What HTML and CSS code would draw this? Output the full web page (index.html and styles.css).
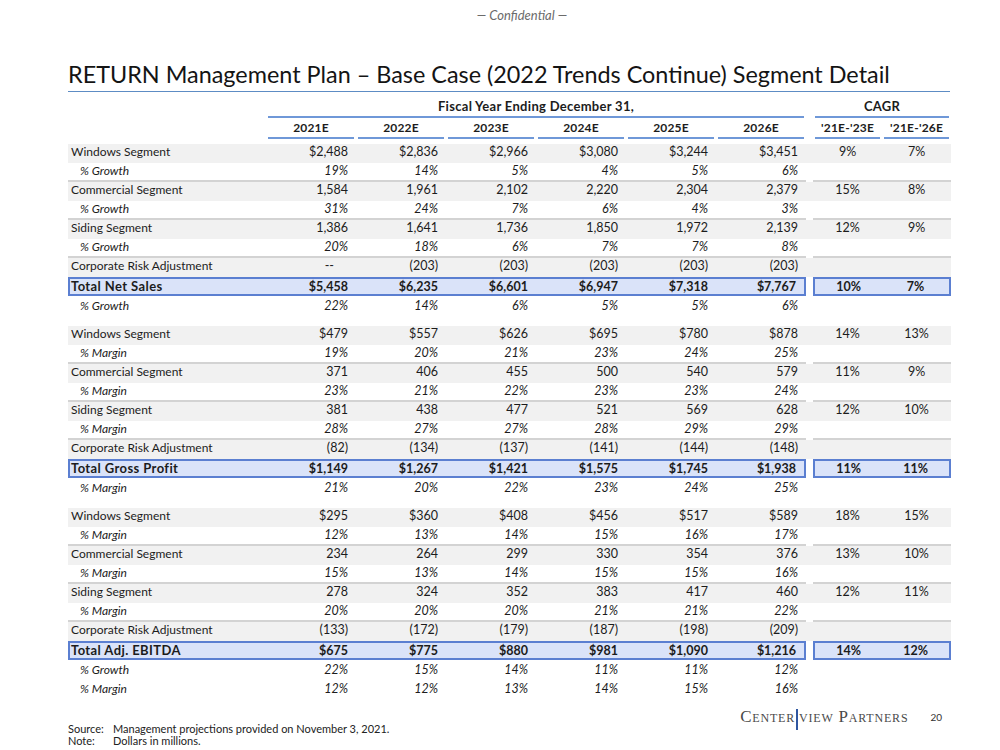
FILE: index.html
```html
<!DOCTYPE html>
<html>
<head>
<meta charset="utf-8">
<link rel="stylesheet" href="styles.css">
</head>
<body>
<div class="conf">— Confidential —</div>
<h1 class="title">RETURN Management Plan – Base Case (2022 Trends Continue) Segment Detail</h1>
<table class="fin">
  <colgroup>
    <col class="c-label"><col class="c-yr"><col class="c-yr"><col class="c-yr"><col class="c-yr"><col class="c-yr"><col class="c-yr"><col class="c-sp"><col class="c-cg"><col class="c-cg">
  </colgroup>
  <thead>
    <tr class="h1">
      <th></th>
      <th colspan="6"><div class="hd">Fiscal Year Ending December 31,</div></th>
      <th></th>
      <th colspan="2"><div class="hd">CAGR</div></th>
    </tr>
    <tr class="h2">
      <th></th>
      <th><div class="hd">2021E</div></th>
      <th><div class="hd">2022E</div></th>
      <th><div class="hd">2023E</div></th>
      <th><div class="hd">2024E</div></th>
      <th><div class="hd">2025E</div></th>
      <th><div class="hd">2026E</div></th>
      <th></th>
      <th><div class="hd">'21E-'23E</div></th>
      <th><div class="hd">'21E-'26E</div></th>
    </tr>
  </thead>
  <tbody>
    <tr class="seg"><td class="lbl">Windows Segment</td><td>$2,488</td><td>$2,836</td><td>$2,966</td><td>$3,080</td><td>$3,244</td><td>$3,451</td><td class="sp"></td><td class="cg">9%</td><td class="cg">7%</td></tr>
    <tr class="pct sep"><td class="lbl">% Growth</td><td>19%</td><td>14%</td><td>5%</td><td>4%</td><td>5%</td><td>6%</td><td class="sp"></td><td class="cg"></td><td class="cg"></td></tr>
    <tr class="seg"><td class="lbl">Commercial Segment</td><td>1,584</td><td>1,961</td><td>2,102</td><td>2,220</td><td>2,304</td><td>2,379</td><td class="sp"></td><td class="cg">15%</td><td class="cg">8%</td></tr>
    <tr class="pct sep"><td class="lbl">% Growth</td><td>31%</td><td>24%</td><td>7%</td><td>6%</td><td>4%</td><td>3%</td><td class="sp"></td><td class="cg"></td><td class="cg"></td></tr>
    <tr class="seg"><td class="lbl">Siding Segment</td><td>1,386</td><td>1,641</td><td>1,736</td><td>1,850</td><td>1,972</td><td>2,139</td><td class="sp"></td><td class="cg">12%</td><td class="cg">9%</td></tr>
    <tr class="pct sep"><td class="lbl">% Growth</td><td>20%</td><td>18%</td><td>6%</td><td>7%</td><td>7%</td><td>8%</td><td class="sp"></td><td class="cg"></td><td class="cg"></td></tr>
    <tr class="seg"><td class="lbl">Corporate Risk Adjustment</td><td class="dash">--</td><td class="neg">(203)</td><td class="neg">(203)</td><td class="neg">(203)</td><td class="neg">(203)</td><td class="neg">(203)</td><td class="sp"></td><td class="cg"></td><td class="cg"></td></tr>
    <tr class="tot"><td class="lbl">Total Net Sales</td><td>$5,458</td><td>$6,235</td><td>$6,601</td><td>$6,947</td><td>$7,318</td><td class="end">$7,767</td><td class="sp"></td><td class="cg first">10%</td><td class="cg end">7%</td></tr>
    <tr class="pct tail"><td class="lbl">% Growth</td><td>22%</td><td>14%</td><td>6%</td><td>5%</td><td>5%</td><td>6%</td><td class="sp"></td><td class="cg"></td><td class="cg"></td></tr>
    <tr class="gap"><td colspan="10"></td></tr>

    <tr class="seg"><td class="lbl">Windows Segment</td><td>$479</td><td>$557</td><td>$626</td><td>$695</td><td>$780</td><td>$878</td><td class="sp"></td><td class="cg">14%</td><td class="cg">13%</td></tr>
    <tr class="pct sep"><td class="lbl">% Margin</td><td>19%</td><td>20%</td><td>21%</td><td>23%</td><td>24%</td><td>25%</td><td class="sp"></td><td class="cg"></td><td class="cg"></td></tr>
    <tr class="seg"><td class="lbl">Commercial Segment</td><td>371</td><td>406</td><td>455</td><td>500</td><td>540</td><td>579</td><td class="sp"></td><td class="cg">11%</td><td class="cg">9%</td></tr>
    <tr class="pct sep"><td class="lbl">% Margin</td><td>23%</td><td>21%</td><td>22%</td><td>23%</td><td>23%</td><td>24%</td><td class="sp"></td><td class="cg"></td><td class="cg"></td></tr>
    <tr class="seg"><td class="lbl">Siding Segment</td><td>381</td><td>438</td><td>477</td><td>521</td><td>569</td><td>628</td><td class="sp"></td><td class="cg">12%</td><td class="cg">10%</td></tr>
    <tr class="pct sep"><td class="lbl">% Margin</td><td>28%</td><td>27%</td><td>27%</td><td>28%</td><td>29%</td><td>29%</td><td class="sp"></td><td class="cg"></td><td class="cg"></td></tr>
    <tr class="seg"><td class="lbl">Corporate Risk Adjustment</td><td class="neg">(82)</td><td class="neg">(134)</td><td class="neg">(137)</td><td class="neg">(141)</td><td class="neg">(144)</td><td class="neg">(148)</td><td class="sp"></td><td class="cg"></td><td class="cg"></td></tr>
    <tr class="tot"><td class="lbl">Total Gross Profit</td><td>$1,149</td><td>$1,267</td><td>$1,421</td><td>$1,575</td><td>$1,745</td><td class="end">$1,938</td><td class="sp"></td><td class="cg first">11%</td><td class="cg end">11%</td></tr>
    <tr class="pct tail"><td class="lbl">% Margin</td><td>21%</td><td>20%</td><td>22%</td><td>23%</td><td>24%</td><td>25%</td><td class="sp"></td><td class="cg"></td><td class="cg"></td></tr>
    <tr class="gap"><td colspan="10"></td></tr>

    <tr class="seg"><td class="lbl">Windows Segment</td><td>$295</td><td>$360</td><td>$408</td><td>$456</td><td>$517</td><td>$589</td><td class="sp"></td><td class="cg">18%</td><td class="cg">15%</td></tr>
    <tr class="pct sep"><td class="lbl">% Margin</td><td>12%</td><td>13%</td><td>14%</td><td>15%</td><td>16%</td><td>17%</td><td class="sp"></td><td class="cg"></td><td class="cg"></td></tr>
    <tr class="seg"><td class="lbl">Commercial Segment</td><td>234</td><td>264</td><td>299</td><td>330</td><td>354</td><td>376</td><td class="sp"></td><td class="cg">13%</td><td class="cg">10%</td></tr>
    <tr class="pct sep"><td class="lbl">% Margin</td><td>15%</td><td>13%</td><td>14%</td><td>15%</td><td>15%</td><td>16%</td><td class="sp"></td><td class="cg"></td><td class="cg"></td></tr>
    <tr class="seg"><td class="lbl">Siding Segment</td><td>278</td><td>324</td><td>352</td><td>383</td><td>417</td><td>460</td><td class="sp"></td><td class="cg">12%</td><td class="cg">11%</td></tr>
    <tr class="pct sep"><td class="lbl">% Margin</td><td>20%</td><td>20%</td><td>20%</td><td>21%</td><td>21%</td><td>22%</td><td class="sp"></td><td class="cg"></td><td class="cg"></td></tr>
    <tr class="seg"><td class="lbl">Corporate Risk Adjustment</td><td class="neg">(133)</td><td class="neg">(172)</td><td class="neg">(179)</td><td class="neg">(187)</td><td class="neg">(198)</td><td class="neg">(209)</td><td class="sp"></td><td class="cg"></td><td class="cg"></td></tr>
    <tr class="tot"><td class="lbl">Total Adj. EBITDA</td><td>$675</td><td>$775</td><td>$880</td><td>$981</td><td>$1,090</td><td class="end">$1,216</td><td class="sp"></td><td class="cg first">14%</td><td class="cg end">12%</td></tr>
    <tr class="pct tail"><td class="lbl">% Growth</td><td>22%</td><td>15%</td><td>14%</td><td>11%</td><td>11%</td><td>12%</td><td class="sp"></td><td class="cg"></td><td class="cg"></td></tr>
    <tr class="pct tail"><td class="lbl">% Margin</td><td>12%</td><td>12%</td><td>13%</td><td>14%</td><td>15%</td><td>16%</td><td class="sp"></td><td class="cg"></td><td class="cg"></td></tr>
  </tbody>
</table>
<div class="footer">
  <div class="notes">
    <div class="note"><span class="nk">Source:</span><span>Management projections provided on November 3, 2021.</span></div>
    <div class="note"><span class="nk">Note:</span><span>Dollars in millions.</span></div>
  </div>
  <div class="brand">
    <div class="logo"><span>Center</span><span class="bar"></span><span>view Partners</span></div>
    <div class="page">20</div>
  </div>
</div>
</body>
</html>
```
FILE: styles.css
```css
html, body {
  margin: 0;
  padding: 0;
}
body {
  width: 1000px;
  height: 750px;
  overflow: hidden;
  background: #ffffff;
  color: #1c1c1c;
  font-family: Lato, "Open Sans", "Liberation Sans", sans-serif;
}
.conf {
  text-align: center;
  font-style: italic;
  font-size: 13px;
  color: #6b6b6b;
  padding: 8px 0 0 44px;
  height: 16px;
  line-height: 14px;
}
.title {
  margin: 36px 50px 0 68px;
  padding: 0 0 3px 0;
  font-size: 23.4px;
  font-weight: 400;
  line-height: 28px;
  color: #141414;
  border-bottom: 1.5px solid #5d8cc4;
}
.fin {
  margin: 5px 0 0 68px;
  width: 883px;
  border-collapse: separate;
  border-spacing: 0;
  table-layout: fixed;
  font-size: 12.5px;
}
.c-label { width: 198px; }
.c-yr { width: 90px; }
.c-sp { width: 7px; }
.c-cg { width: 69px; }

.fin th {
  padding: 0;
  font-weight: 700;
  text-align: center;
  font-size: 12px;
  letter-spacing: 0.2px;
}
.fin .h1 th {
  font-size: 13px;
  letter-spacing: 0.3px;
}
.fin .h2 th {
  padding-bottom: 5px;
}
.fin .hd {
  margin: 0 2px;
  border-bottom: 2px solid #6f98d8;
  height: 19px;
  line-height: 19px;
}
.fin td {
  box-sizing: border-box;
  padding: 0 8px 0 0;
  height: 19px;
  line-height: 15px;
  vertical-align: top;
  text-align: right;
  white-space: nowrap;
}
.fin td.lbl {
  text-align: left;
  padding: 0 0 0 3px;
  font-size: 12px;
}
.fin td.cg {
  text-align: center;
  padding: 0;
}
.fin td.dash {
  padding-right: 22px;
}
.seg td {
  background: #f1f1f1;
}
.pct td {
  font-style: italic;
}
.pct td.lbl {
  padding-left: 12px;
}
.pct.tail td {
  vertical-align: middle;
}
.sep td {
  border-bottom: 2px solid #d3d3d3;
}
.sep td.sp {
  border-bottom: none;
}
.tot td {
  background: #dae3f9;
  font-weight: 700;
  border-top: 2px solid #5b7fd1;
  border-bottom: 2px solid #5b7fd1;
  line-height: 15px;
  vertical-align: middle;
}
.fin .tot td.lbl {
  border-left: 2px solid #5b7fd1;
  padding-left: 1px;
  font-size: 13px;
  letter-spacing: 0.4px;
}
.tot td.end {
  border-right: 2px solid #5b7fd1;
}
.tot td.first {
  border-left: 2px solid #5b7fd1;
}
.tot td.sp {
  background: #ffffff;
  border: none;
}
.gap td {
  height: 11px;
  padding: 0;
}
.footer {
  display: flex;
  justify-content: space-between;
  align-items: flex-start;
  margin: 8px 50px 0 68px;
}
.notes {
  padding-top: 17px;
  font-size: 11px;
  line-height: 12px;
  color: #222;
}
.note {
  display: flex;
}
.nk {
  width: 45px;
}
.brand {
  display: flex;
  align-items: center;
  gap: 22px;
  margin-right: 8px;
}
.logo {
  display: flex;
  align-items: center;
  font-family: "Liberation Serif", "DejaVu Serif", serif;
  font-variant: small-caps;
  font-size: 17px;
  letter-spacing: 0.8px;
  color: #4a4a4a;
}
.logo .bar {
  display: inline-block;
  width: 2px;
  height: 21px;
  margin: 0 1px;
  background: #2f56a0;
  position: relative;
  top: 3px;
}
.page {
  font-size: 10px;
  color: #333;
}
```
